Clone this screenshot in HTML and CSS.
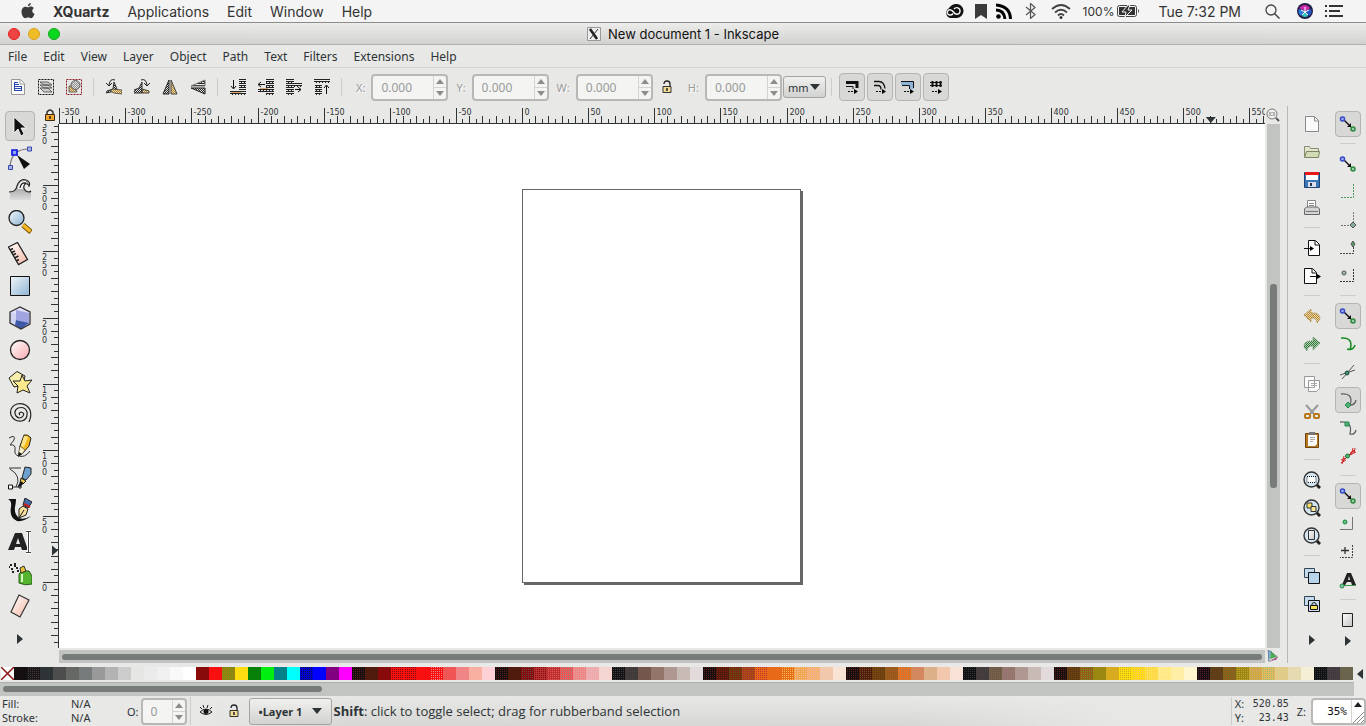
FILE: index.html
```html
<!DOCTYPE html>
<html lang="en">
<head>
  <meta charset="UTF-8">
  <meta name="viewport" content="width=device-width, initial-scale=1.0">
  <title>New document 1 - Inkscape</title>
  <link rel="stylesheet" href="styles.css">
</head>
<body>
  <svg class="defs" aria-hidden="true">
    <defs>
      <pattern id="dither" width="2" height="2" patternUnits="userSpaceOnUse"><path d="M0 0h1v1H0zM1 1h1v1H1z" fill="#222"/></pattern>
      <pattern id="rows" width="3" height="4" patternUnits="userSpaceOnUse"><path d="M0 0h3v1H0zM0 2h3v1H0zM2 3h1v1H2z" fill="#222"/></pattern>
      <pattern id="gold" width="2" height="2" patternUnits="userSpaceOnUse"><path d="M0 0h2v2H0z" fill="#ead9b0"/><path d="M0 0h1v1H0zM1 1h1v1H1z" fill="#b8862c"/></pattern>
      <pattern id="green" width="2" height="2" patternUnits="userSpaceOnUse"><path d="M0 0h2v2H0z" fill="#b4ccb4"/><path d="M0 0h1v1H0zM1 1h1v1H1z" fill="#2c7a34"/></pattern>
      <linearGradient id="sky" x2="1" y2="1"><stop stop-color="#f2f7fb"/><stop offset="1" stop-color="#8db4d4"/></linearGradient>
      <linearGradient id="skin" x2="1" y2="1"><stop stop-color="#fff"/><stop offset="1" stop-color="#f4b8a4"/></linearGradient>
      <linearGradient id="pink" x2="1" y2="1"><stop stop-color="#fff"/><stop offset="1" stop-color="#f7a9ae"/></linearGradient>
      <linearGradient id="metal" x2="0" y2="1"><stop stop-color="#888"/><stop offset="1" stop-color="#ddd"/></linearGradient>
      <linearGradient id="paper" x2="1" y2="1"><stop stop-color="#fff"/><stop offset="1" stop-color="#c4c4c4"/></linearGradient>
    </defs>
    <symbol id="snap" viewBox="0 0 18 18">
      <path d="M5 5l7 7" stroke="#111" stroke-width="1.4"/><path d="M12 8v4H8z" fill="#111"/>
      <circle cx="3.500" cy="4" r="2" fill="#a8b8ee" stroke="#3048c8" stroke-width="1.500"/>
      <circle cx="14" cy="14" r="2" fill="#9cc8b4" stroke="#2e8a3a" stroke-width="1.500"/>
    </symbol>
    <symbol id="unlocked" viewBox="0 0 14 14">
      <path d="M4 4q0-3 3-3t3 3v2" fill="none" stroke="#222" stroke-width="1.300"/><path d="M3 6.500h8v6H3z" fill="#f3dc92" stroke="#333"/><path d="M7 8v3" stroke="#222" stroke-width="1.500"/>
    </symbol>
    <symbol id="more" viewBox="0 0 8 10"><path d="M1 0l6 5-6 5z" fill="#2e3436"/></symbol>
    <symbol id="lens" viewBox="0 0 18 18">
      <path d="M13 13l4 4" stroke="#222" stroke-width="3"/><circle cx="8.500" cy="8.500" r="7.500" fill="#d5e6f3" stroke="#333" stroke-width="1.400"/>
    </symbol>
  </svg>

  <header class="mac-bar">
    <nav class="mac-menu" aria-label="System">
      <a href="#" aria-label="Apple menu"><svg class="apple" viewBox="0 0 14 16"><path d="M9.800 0c.1 1.800-1.200 3.200-2.900 3.300C6.800 1.700 8.200.2 9.800 0zM7 4.300c.8 0 1.600-.8 3-.8 1 0 2.200.5 2.900 1.600-2.400 1.500-2 4.900.6 5.800-.5 1.500-1.900 4.300-3.400 4.300-1.100 0-1.600-.7-2.900-.7s-1.800.7-2.900.7C2.500 15.200.500 11.700.500 8.700c0-3.200 2-5 3.900-5 1.200 0 2 .6 2.600.6z" fill="#3a3a3a"/></svg></a>
      <a class="app-name" href="#">XQuartz</a>
      <a href="#">Applications</a>
      <a href="#">Edit</a>
      <a href="#">Window</a>
      <a href="#">Help</a>
    </nav>
    <div class="mac-status">
      <svg width="20" height="14" viewBox="0 0 20 14"><path d="M6 14A5.500 5.500 0 0 1 5 4Q8 0 12 0a7 7 0 0 1 1 14z" fill="#111"/><path d="M9 9.500c-2 3-7 1-5.500-2C5 4.500 8 6 9.500 8c2 3 6 3 6.500-.5.500-4-4-5-6-2.500" fill="none" stroke="#f4f4f4" stroke-width="1.400"/></svg>
      <svg class="bookmark" width="12" height="15" viewBox="0 0 12 15"><path d="M0 0h12v15l-6-4-6 4z" fill="#3a3a3a"/></svg>
      <svg class="rss" width="16" height="16" viewBox="0 0 16 16"><circle cx="2.500" cy="13.500" r="2.300"/><path d="M0 7q8 0 9 9M0 2q14 1 14.500 14" fill="none" stroke="#000" stroke-width="3"/></svg>
      <svg class="bluetooth" width="11" height="16" viewBox="0 0 11 16"><path d="M1 4l9 7.500-4.500 4V.5L10 4.500 1 12" fill="none" stroke="#555" stroke-width="1.200"/></svg>
      <svg class="wifi" width="20" height="15" viewBox="0 0 20 15"><path d="M1 5q9-8 18 0M4 8.500q6-5.500 12 0M7 11.500q3-3 6 0" fill="none" stroke="#444" stroke-width="1.800"/><circle cx="10" cy="13.500" r="1.500" fill="#333"/></svg>
      <span class="charge">100%</span>
      <svg class="battery" width="23" height="12" viewBox="0 0 23 12"><rect x=".5" y=".5" width="19" height="11" rx="2" fill="#f4f4f4" stroke="#444"/><path d="M2 2h16v8H2z" fill="#333"/><path d="M11 0L5 7h4l-1 5 7-7h-4l2-5z" fill="#333" stroke="#f4f4f4"/><path d="M21 4q2 2 0 4z" fill="#444"/></svg>
      <span class="clock">Tue 7:32 PM</span>
      <svg class="search" width="15" height="15" viewBox="0 0 15 15"><circle cx="6" cy="6" r="5" fill="none" stroke="#444" stroke-width="1.300"/><path d="M9.500 9.500l5 5" stroke="#444" stroke-width="1.500"/></svg>
      <svg class="siri" width="16" height="16" viewBox="0 0 16 16"><circle cx="8" cy="8" r="8" fill="#231c46"/><path d="M2 5q6-6 11 0L9 8z" fill="#d22bb0"/><path d="M2 6l6 2-4 5q-4-3-2-7z" fill="#2e7be0"/><path d="M14 6L8 8l4 5q4-3 2-7z" fill="#2457c8"/><path d="M5 13l3-5 3 5q-3 2-6 0z" fill="#31c8c0"/><path d="M8 4v5M4 7l4 2 4-2M8 9l-3 3M8 9l3 3" stroke="#fff" fill="none"/></svg>
      <svg class="list" width="18" height="12" viewBox="0 0 18 12"><path d="M0 1h2M4 1h14M0 6h2M4 6h11M0 11h2M4 11h14" stroke="#333" stroke-width="2"/></svg>
    </div>
  </header>

  <div class="title-bar">
    <div class="lights">
      <button class="light close" aria-label="Close"></button>
      <button class="light minimize" aria-label="Minimize"></button>
      <button class="light maximize" aria-label="Zoom"></button>
    </div>
    <div class="title">
      <svg width="14" height="14" viewBox="0 0 14 14"><path d="M.5.5h13v13H.5z" fill="#eee" stroke="#999"/><path d="M3 2l7 10" stroke="#222" stroke-width="2.600"/><path d="M11 2L3 12" stroke="#333"/></svg>
      <h1>New document 1 - Inkscape</h1>
    </div>
  </div>

  <nav class="menu-bar" aria-label="Inkscape">
    <a href="#">File</a><a href="#">Edit</a><a href="#">View</a><a href="#">Layer</a><a href="#">Object</a><a href="#">Path</a><a href="#">Text</a><a href="#">Filters</a><a href="#">Extensions</a><a href="#">Help</a>
  </nav>

  <div class="tool-options">
    <button class="cell" aria-label="Select all"><svg viewBox="0 0 16 16"><path d="M1.500.5h9l4 4v11h-13z" fill="#fff" stroke="#999"/><path d="M10 1v4h4" fill="none" stroke="#999"/><path d="M4 3.500h4M4 5.500h5M4 7.500h8M4 9.500h8M4 11.500h8M4.500 4v8M11.500 7v5" stroke="#2948b8"/></svg></button>
    <button class="cell" aria-label="Select all in all layers"><svg viewBox="0 0 16 16"><path d="M.5.5h15v15H.5z" fill="none" stroke="#111" stroke-dasharray="2 1"/><path d="M2 3h8l4 3H6zM2 6h8l4 3H6zM2 9h8l4 4H6z" fill="#ccc" stroke="#444" stroke-width=".8"/></svg></button>
    <button class="cell" aria-label="Deselect"><svg viewBox="0 0 16 16"><path d="M.5.5h15v15H.5z" fill="none" stroke="#8c1c24" stroke-dasharray="2 1"/><path d="M3 7h5l3 6H3z" fill="url(#gold)" stroke="#666"/><circle cx="9.500" cy="6" r="4.500" fill="#ddd" stroke="#555"/><circle cx="9.500" cy="6" r="4" fill="url(#dither)" opacity=".4"/></svg></button>
    <i class="sep"></i>
    <button class="cell" aria-label="Rotate left"><svg viewBox="0 0 16 16"><path d="M9 1Q4-1 3 6M0 4l3 3 3-3" fill="none" stroke="#222"/><path d="M8 3l3 7-6 3-5 1 1-2 6-2z" fill="url(#dither)" stroke="#333"/><path d="M7 10l9 1v4l-8-1-4-2z" fill="url(#gold)" stroke="#444" stroke-width=".8"/></svg></button>
    <button class="cell" aria-label="Rotate right"><svg viewBox="0 0 16 16"><path d="M7 1q5-2 6 5M10 4l3 3 3-3" fill="none" stroke="#222"/><path d="M8 10l7 2v2H8z" fill="url(#gold)" stroke="#444"/><path d="M8 3v11H0v-3l5-2z" fill="url(#dither)" stroke="#333"/></svg></button>
    <button class="cell" aria-label="Flip horizontal"><svg viewBox="0 0 16 16"><path d="M7 1v14H1z" fill="url(#dither)" stroke="#222"/><path d="M9 1v14h6z" fill="url(#gold)" stroke="#444"/></svg></button>
    <button class="cell" aria-label="Flip vertical"><svg viewBox="0 0 16 16"><path d="M15 1v6H1z" fill="url(#rows)" stroke="#777"/><path d="M15 15V9H1z" fill="url(#dither)" stroke="#222"/></svg></button>
    <i class="sep"></i>
    <button class="cell" aria-label="Lower to bottom"><svg viewBox="0 0 16 16"><path d="M9 0h7v11H9zM0 12h16v4H0z" fill="url(#rows)"/><path d="M3.500 1v8M1 7l2.500 3L6 7" fill="none" stroke="#111"/><path d="M1 13.500h10" stroke="#d9a56e"/></svg></button>
    <button class="cell" aria-label="Lower"><svg viewBox="0 0 16 16"><path d="M8 0h8v16H8zM0 9h12v4H0z" fill="url(#rows)"/><path d="M1 5.500h6M3 3L0 5.500 3 8" fill="none" stroke="#111"/><path d="M2 9.500h8" stroke="#d9a56e"/></svg></button>
    <button class="cell" aria-label="Raise"><svg viewBox="0 0 16 16"><path d="M0 0h8v16H0zM6 4h10v4H6z" fill="url(#rows)"/><path d="M9 10.500h6M12 8l3 2.500-3 2.500" fill="none" stroke="#111"/></svg></button>
    <button class="cell" aria-label="Raise to top"><svg viewBox="0 0 16 16"><path d="M0 0h16v4H0zM1 5h7v11H1z" fill="url(#rows)"/><path d="M12.500 6v9M10 9l2.500-3L15 9" fill="none" stroke="#111"/></svg></button>
    <i class="sep sep-wide"></i>
    <label class="dim" for="pos-x">X:</label>
    <div class="spin"><input id="pos-x" type="text" value="0.000" disabled><div class="steps"><button aria-label="Increase X" disabled></button><button aria-label="Decrease X" disabled></button></div></div>
    <label class="dim" for="pos-y">Y:</label>
    <div class="spin"><input id="pos-y" type="text" value="0.000" disabled><div class="steps"><button aria-label="Increase Y" disabled></button><button aria-label="Decrease Y" disabled></button></div></div>
    <label class="dim" for="size-w">W:</label>
    <div class="spin"><input id="size-w" type="text" value="0.000" disabled><div class="steps"><button aria-label="Increase width" disabled></button><button aria-label="Decrease width" disabled></button></div></div>
    <button class="cell ratio" aria-label="Lock width and height"><svg viewBox="0 0 14 14"><use href="#unlocked"/></svg></button>
    <label class="dim" for="size-h">H:</label>
    <div class="spin"><input id="size-h" type="text" value="0.000" disabled><div class="steps"><button aria-label="Increase height" disabled></button><button aria-label="Decrease height" disabled></button></div></div>
    <select class="drop unit" aria-label="Unit"><option>mm</option></select>
    <i class="sep"></i>
    <button class="toggle on" aria-label="Scale stroke width"><svg viewBox="0 0 14 14"><path d="M1 2.500h11V8" fill="none" stroke="#111" stroke-width="3"/><path d="M1 6.500h7V9" fill="none" stroke="#111"/><path d="M3 11.500h6" stroke="#111" stroke-dasharray="2 1"/><path d="M9 9l4 2.500L9 14z"/></svg></button>
    <button class="toggle on" aria-label="Scale corners"><svg viewBox="0 0 14 14"><path d="M1 1.500h5q5 0 6 7M1 5.500h4q3 0 3 4" fill="none" stroke="#111" stroke-width="1.300"/><path d="M3 11.500h6" stroke="#111" stroke-dasharray="2 1"/><path d="M9 9l4 2.500L9 14z"/></svg></button>
    <button class="toggle on" aria-label="Move gradients"><svg viewBox="0 0 14 14"><path d="M0 1h13v8H9V5H0z" fill="#8fb4dc"/><path d="M0 1.500h12.500V8M1 5.500h7.500V9" fill="none" stroke="#111"/><path d="M3 11.500h6" stroke="#111" stroke-dasharray="2 1"/><path d="M9 9l4 2.500L9 14z"/></svg></button>
    <button class="toggle on" aria-label="Move patterns"><svg viewBox="0 0 14 14"><path d="M1 2.500h12M1 5.500h12M3.500 1v6M7.500 1v6M11.500 1v6" fill="none" stroke="#111"/><path d="M2 2.500h3M6 2.500h3M10 2.500h3M2 5.500h3M6 5.500h3M10 5.500h3" stroke="#111" stroke-width="2"/><path d="M3 11.500h6" stroke="#111" stroke-dasharray="2 1"/><path d="M9 9l4 2.500L9 14z"/></svg></button>
  </div>

  <main class="workspace">
    <div class="toolbox" role="toolbar" aria-label="Tools">
      <button class="tool on" aria-label="Selector"><svg viewBox="0 0 24 24"><path d="M6 3v16l4-4 3 7 3-2-3-6h5z" fill="#111" stroke="#fff" stroke-width=".8"/></svg></button>
      <button class="tool" aria-label="Node editor"><svg viewBox="0 0 24 24"><path d="M2 21Q3 3 21 3" fill="none" stroke="#777" stroke-width="1.200"/><path d="M9 9l13 9-6 5z" fill="#111"/><path d="M4 4h5v5H4z" fill="#8aa4ee" stroke="#0a10e8" stroke-width="1.600"/><path d="M19.500 1h4v4h-4zM.500 19.500h4v4h-4z" fill="#aab4e8" stroke="#3848b0"/></svg></button>
      <button class="tool" aria-label="Tweak"><svg viewBox="0 0 24 24"><path d="M2 13q7 1 8-5 3-7 9-5l2 3-2 1q-4-2-4 1 0 5 4 5h4v9H2z" fill="url(#metal)"/><path d="M10 11q0-9 8-8l1 4q-5 0-4 4z" fill="#f4f4f4"/><path d="M1 14q7 0 8-6 3-8 9-6 5 2 3 6-1-3-4-2-3 4 1 7 3 2 5 0M12 10q1-6 6-5" fill="none" stroke="#222" stroke-width="1.200"/></svg></button>
      <button class="tool" aria-label="Zoom"><svg viewBox="0 0 24 24"><path d="M15 15l8 7" stroke="#6b4a00" stroke-width="5"/><path d="M15 15l7.500 6.500" stroke="#f5b820" stroke-width="3.500"/><circle cx="8.500" cy="8" r="7.500" fill="url(#sky)" stroke="#222" stroke-width="1.300"/></svg></button>
      <button class="tool" aria-label="Measure"><svg viewBox="0 0 24 24"><path d="M.500 5L9.500.5l10 17-9 5z" fill="url(#skin)" stroke="#222" stroke-width="1.300"/><path d="M2 8l3-1.500M3.500 10.500L7 9M5 13l3-1.500M6.500 16l4-2M8 19l3-1.500" stroke="#222" stroke-width="1.500"/></svg></button>
      <button class="tool" aria-label="Rectangle"><svg viewBox="0 0 24 24"><path d="M2.500 2.500h19v19h-19z" fill="url(#sky)" stroke="#111"/></svg></button>
      <button class="tool" aria-label="3D box"><svg viewBox="0 0 24 24"><path d="M2 6l10-5 10 5v12l-9 5-11-6z" fill="#e0e0f8"/><path d="M8 4l13 3v12l-8-4-5-1z" fill="#a0a4e0"/><path d="M2 6l6 2v11l-6-3z" fill="#d0d2f2"/><path d="M8 14l13 3-8 6-6-4z" fill="#3e58a8"/><path d="M2 6l10-5 10 5v12l-9 5-11-6z" fill="none" stroke="#333" stroke-width="1.300"/></svg></button>
      <button class="tool" aria-label="Ellipse"><svg viewBox="0 0 24 24"><circle cx="12" cy="12" r="9.500" fill="url(#pink)" stroke="#222" stroke-width="1.300"/></svg></button>
      <button class="tool" aria-label="Star"><svg viewBox="0 0 24 24"><path d="M1 8l8-6.500L17 6l-2 9-9 2z" fill="#f8efae" stroke="#222"/><path d="M14 5l3 6 7-1-5 6 3 7-7-3-6 3 1-7-5-5 7 0z" fill="#fbe98c" stroke="#222"/></svg></button>
      <button class="tool" aria-label="Spiral"><svg viewBox="0 0 24 24"><path d="M12 13q-2-2 1-3 4 1 2 4-3 4-7 0-3-5 2-8 7-2 9 4 1 7-5 9-8 1-11-6Q1 5 9 2q9-2 13 6 2 6-1 12" fill="none" stroke="#222" stroke-width="1.200"/></svg></button>
      <button class="tool" aria-label="Pencil"><svg viewBox="0 0 24 24"><path d="M1 4q7-4 5 2l-4 5q6-1 5 5-1 5 4 6 6 2 11-5" fill="none" stroke="#333"/><path d="M16 1q4-1 7 3l-2 8-7 8-3 1 1-9z" fill="#f3b81c" stroke="#222"/><path d="M16 2l4 1-4 10-3-1z" fill="#fbe488"/><path d="M12 12l5 4-3 4-4 2z" fill="#fff1c8" stroke="#333" stroke-width=".6"/><path d="M11 18l3 2-4 3z" fill="#111"/></svg></button>
      <button class="tool" aria-label="Bezier"><svg viewBox="0 0 24 24"><path d="M1 2h12M2 3q12 7 6 18M3 21h9" fill="none" stroke="#333"/><path d="M17 1l6 1v6l-5 6-4-2z" fill="#6d9fd0" stroke="#222"/><path d="M13 12l5 3-3 3-3-1z" fill="#e9c64c" stroke="#222"/><path d="M14 16l-3 5" stroke="#111" stroke-width="3"/><path d="M.5 19h4v4h-4zM11 20h2v2h-2z" fill="#fff" stroke="#111"/></svg></button>
      <button class="tool" aria-label="Calligraphy"><svg viewBox="0 0 24 24"><path d="M0 1l8 0q0 4-1 8-1 7 4 11 5 2 12-2-7 6-14 5Q1 20 3 9q1-6-3-8z" fill="#111"/><path d="M17 0l7 4-4 6-5-3z" fill="#3f6db0" stroke="#222"/><path d="M15 8l5 3-2 6-7 3 0-9z" fill="#f8df9c" stroke="#222"/><path d="M16 6l6 3" stroke="#c82020" stroke-width="2"/><path d="M11 20l5-8" stroke="#111"/></svg></button>
      <button class="tool" aria-label="Text"><svg viewBox="0 0 24 24"><path d="M7 3h7l6 17h-6l-1-3H7l-1 3H0zM10 8l-2 6h4z" fill="#222" fill-rule="evenodd"/><path d="M18 1.500h5M20.500 2v20M18 22.500h5" stroke="#fff" stroke-width="3"/><path d="M18 1.500h5M20.500 2v20M18 22.500h5" stroke="#444"/></svg></button>
      <button class="tool" aria-label="Spray"><svg viewBox="0 0 24 24"><path d="M2 3h2M6 2h2M3 7h2M8 6h2M4 10h2M9 9h2M6 4h2M1 5h1" stroke="#222" stroke-width="2"/><path d="M11 12l3-3h7l3 5v8q-7 2-13-1z" fill="#55b52e" stroke="#2a5a18"/><path d="M12 6l4-2 2 5-5 2z" fill="#e8c23c" stroke="#333"/><path d="M14 12v8" stroke="#d8f4c4" stroke-width="2"/></svg></button>
      <button class="tool" aria-label="Eraser"><svg viewBox="0 0 24 24"><path d="M11 1l10 5-9 17-9-5z" fill="url(#skin)" stroke="#333" stroke-width="1.200"/></svg></button>
      <button class="tool more" aria-label="More tools"><svg viewBox="0 0 8 10"><use href="#more"/></svg></button>
    </div>

    <div class="editor">
      <button class="guide-lock" aria-label="Lock guides"><svg viewBox="0 0 12 12"><path d="M3 6V3q3-4 6 0v3" fill="none" stroke="#333" stroke-width="1.500"/><path d="M1.500 5.500h9v6h-9z" fill="#f3a62b" stroke="#3b2a10"/><path d="M6 7v3" stroke="#222" stroke-width="1.500"/></svg></button>
      <svg class="ruler ruler-x" id="ruler-x"></svg>
      <button class="zoom-lock" aria-label="Zoom on resize"><svg viewBox="0 0 14 14"><circle cx="6" cy="6" r="5" fill="#eee" stroke="#777"/><path d="M10 10l3 3" stroke="#555" stroke-width="2"/><path d="M4 4v4M8 4v4M6 4v1M6 7v1" stroke="#777"/></svg></button>
      <svg class="ruler ruler-y" id="ruler-y"></svg>
      <div class="canvas"><div class="page" id="page"></div></div>
      <div class="scroll scroll-y"><div class="thumb"></div></div>
      <div class="scroll scroll-x"><div class="thumb"></div></div>
      <button class="cms" aria-label="Color management"><svg viewBox="0 0 12 12"><path d="M1 0l4 1-3 10H1z" fill="#79aed8"/><path d="M4 1l6 6-7 2z" fill="#4eab58"/><path d="M2 11l9-4-2 3z" fill="#c04a9a"/><path d="M1 0l10 7-9 5z" fill="none" stroke="#666" stroke-dasharray="1 1"/></svg></button>
    </div>

    <div class="commands" role="toolbar" aria-label="Commands">
      <button aria-label="New"><svg viewBox="0 0 18 18"><path d="M2.500 1.500h9l4 4v11h-13z" fill="#fafafa" stroke="#8a8a8a"/><path d="M11.500 2v4h4" fill="none" stroke="#8a8a8a"/></svg></button>
      <button aria-label="Open"><svg viewBox="0 0 18 18"><path d="M1.500 14V3.500h5l1 2h8V9" fill="#e2e6cc" stroke="#888c70"/><path d="M3.500 8.500h13l-1 6h-14z" fill="#d0dab4" stroke="#7c8460"/></svg></button>
      <button aria-label="Save"><svg viewBox="0 0 18 18"><path d="M1.500 1.500h15v15h-15z" fill="#3c74b8" stroke="#1f4274"/><path d="M3 3h12v6H3z" fill="#fff"/><path d="M2 1h14v3H2z" fill="#e81818"/><path d="M5 11h8v5H5z" fill="#dde"/><path d="M7 12h2v3H7z" fill="#234"/></svg></button>
      <button aria-label="Print"><svg viewBox="0 0 18 18"><path d="M4.500 9V1.500h8V9M6 4.500h5M6 6.500h5" fill="#fff" stroke="#888"/><path d="M1.500 10l2-2h11l2 2v5.500h-15z" fill="#d4d4d4" stroke="#666"/><path d="M3 12.500h12" stroke="#777"/></svg></button>
      <i class="hsep"></i>
      <button aria-label="Import"><svg viewBox="0 0 18 18"><path d="M5.500 1.500h7l4 4v11h-11z" fill="#fff" stroke="#111"/><path d="M12 2v4h4M1 9.500h9" fill="none" stroke="#111"/><path d="M7 7l4 2.500L7 12z"/></svg></button>
      <button aria-label="Export"><svg viewBox="0 0 18 18"><path d="M1.500 1.500h8l4 4v11h-12z" fill="#fff" stroke="#111"/><path d="M9 2v4h4M7 9.500h9" fill="none" stroke="#111"/><path d="M14 7l4 2.500-4 2.500z"/></svg></button>
      <i class="hsep"></i>
      <button aria-label="Undo"><svg viewBox="0 0 18 18"><path d="M1 8l7-6v4q9-1 9 6l-3 4q0-5-6-5v4z" fill="url(#gold)" stroke="#a08040" stroke-dasharray="1 1"/></svg></button>
      <button aria-label="Redo"><svg viewBox="0 0 18 18"><path d="M17 8l-7-6v4q-9-1-9 6l3 4q0-5 6-5v4z" fill="url(#green)" stroke="#5a8a60" stroke-dasharray="1 1"/></svg></button>
      <i class="hsep"></i>
      <button aria-label="Copy"><svg viewBox="0 0 18 18"><path d="M1.500 1.500h10v11h-10zM5.500 5.500h11v8l-3 3h-8z" fill="#fafafa" stroke="#999"/><path d="M8 8.500h6M8 10.500h6M8 12.500h4" stroke="#aaa"/></svg></button>
      <button aria-label="Cut"><svg viewBox="0 0 18 18"><path d="M3 2l8 9M15 2l-8 9" stroke="#999" stroke-width="2"/><rect x="2" y="11" width="5" height="4" rx="1" fill="none" stroke="#b87818" stroke-width="2"/><rect x="11" y="11" width="5" height="4" rx="1" fill="none" stroke="#b87818" stroke-width="2"/></svg></button>
      <button aria-label="Paste"><svg viewBox="0 0 18 18"><path d="M2.500 2.500h13v14h-13z" fill="#b9771d" stroke="#6e4510"/><path d="M5 4h9v9l-2 2H5z" fill="#fafafa"/><path d="M6 1h6v3H6z" fill="#777"/><path d="M7 6.500h5M7 8.500h5M7 10.500h3" stroke="#aaa"/></svg></button>
      <i class="hsep"></i>
      <button aria-label="Zoom selection"><svg viewBox="0 0 18 18"><use href="#lens"/><path d="M4 5.500h9v6H4z" fill="#fff" stroke="#111" stroke-dasharray="1 1"/></svg></button>
      <button aria-label="Zoom drawing"><svg viewBox="0 0 18 18"><use href="#lens"/><path d="M4 4h5v5H4z" fill="#f8e060" stroke="#333"/><path d="M8 7.500h5v5H8z" fill="#f8e88c" stroke="#333"/></svg></button>
      <button aria-label="Zoom page"><svg viewBox="0 0 18 18"><use href="#lens"/><path d="M5.500 3.500h6v9h-6z" fill="url(#paper)" stroke="#333"/></svg></button>
      <i class="hsep"></i>
      <button aria-label="Duplicate"><svg viewBox="0 0 18 18"><path d="M1.500 1.500h10v9h-10z" fill="#c5dbec" stroke="#345"/><path d="M5.500 5.500h11v11h-11z" fill="#b8d4ea" stroke="#111"/></svg></button>
      <button aria-label="Clone"><svg viewBox="0 0 18 18"><path d="M1.500 1.500h10v9h-10z" fill="#c5dbec" stroke="#345"/><path d="M5.500 5.500h11v11h-11z" fill="#c8def0" stroke="#111"/><path d="M9 10V8.500q2-2 4 0V10" fill="none" stroke="#111"/><path d="M7.500 10.500h7v4h-7z" fill="#f6e05c" stroke="#111"/></svg></button>
      <button class="more" aria-label="More commands"><svg viewBox="0 0 8 10"><use href="#more"/></svg></button>
    </div>

    <div class="commands snaps" role="toolbar" aria-label="Snapping">
      <button class="on" aria-label="Enable snapping"><svg><use href="#snap"/></svg></button>
      <i class="hsep"></i>
      <button aria-label="Snap bounding boxes"><svg><use href="#snap"/></svg></button>
      <button aria-label="Snap box edges"><svg viewBox="0 0 18 18"><path d="M14.500 1v13.500H1" fill="none" stroke="#4f9a5c" stroke-dasharray="2 1"/></svg></button>
      <button aria-label="Snap box corners"><svg viewBox="0 0 18 18"><path d="M14.500 1v13.500H1" fill="none" stroke="#777" stroke-dasharray="2 1"/><path d="M14 11l3 3-3 3-3-3z" fill="#8a9" stroke="#555"/></svg></button>
      <button aria-label="Snap edge midpoints"><svg viewBox="0 0 18 18"><path d="M14.500 8v6.500H1" fill="none" stroke="#444" stroke-dasharray="2 1"/><path d="M14 2l2 3-2 3-2-3z" fill="#5a9a68" stroke="#555"/></svg></button>
      <button aria-label="Snap box centers"><svg viewBox="0 0 18 18"><path d="M14.500 2v12.500H1" fill="none" stroke="#333" stroke-dasharray="2 1"/><circle cx="5" cy="6" r="2" fill="#9cb8a4" stroke="#555"/></svg></button>
      <i class="hsep"></i>
      <button class="on" aria-label="Snap nodes"><svg><use href="#snap"/></svg></button>
      <button aria-label="Snap to paths"><svg viewBox="0 0 18 18"><path d="M2 3q13-1 9 12M8 14q6 2 8-4" fill="none" stroke="#178a24" stroke-width="1.600"/></svg></button>
      <button aria-label="Snap intersections"><svg viewBox="0 0 18 18"><path d="M1 12l15-5M3 16L15 2" stroke="#555" fill="none"/><circle cx="8" cy="10" r="2" fill="#38a048" stroke="#245"/></svg></button>
      <button class="on" aria-label="Snap cusp nodes"><svg viewBox="0 0 18 18"><path d="M2 3q13-1 9 11q5 0 6-5" fill="none" stroke="#666" stroke-width="1.300"/><path d="M9 11l3 3-3 3-3-3z" fill="#54b070" stroke="#285"/></svg></button>
      <button aria-label="Snap smooth nodes"><svg viewBox="0 0 18 18"><path d="M1 3q13-1 10 12q5 1 6-4" fill="none" stroke="#666" stroke-width="1.300"/><path d="M6 3h4v4H6z" fill="#54b070" stroke="#285"/></svg></button>
      <button aria-label="Snap line midpoints"><svg viewBox="0 0 18 18"><path d="M2 16l13-13M2 13l5-2M2 16l5-3M3 17l2-8M11 6l5-2M11 8l6-3M12 8l2-7M15 6l1-5" stroke="#d02828"/><circle cx="8.500" cy="9" r="2" fill="#60b078" stroke="#173"/></svg></button>
      <i class="hsep"></i>
      <button class="on" aria-label="Snap others"><svg><use href="#snap"/></svg></button>
      <button aria-label="Snap object centers"><svg viewBox="0 0 18 18"><path d="M13.500 2v12.500H1" fill="none" stroke="#777"/><circle cx="6" cy="7" r="2" fill="#70c080" stroke="#184"/></svg></button>
      <button aria-label="Snap rotation centers"><svg viewBox="0 0 18 18"><path d="M13.500 2v12.500H1" fill="none" stroke="#444" stroke-dasharray="2 1"/><path d="M2 7.500h8M6 4v7" stroke="#333" stroke-width="1.300"/></svg></button>
      <button aria-label="Snap text baseline"><svg viewBox="0 0 18 18"><path d="M8 2h4l5 12h-4l-1-3H8l-2 3H3zM10 5L9 9h2z" fill="#222" fill-rule="evenodd"/><path d="M4 14.500h13" stroke="#3a9a48"/><circle cx="3" cy="15" r="2" fill="#8c9" stroke="#285"/></svg></button>
      <i class="hsep"></i>
      <button aria-label="Snap page border"><svg viewBox="0 0 18 18"><path d="M3.500 2.500h10v13h-10z" fill="url(#paper)" stroke="#222"/></svg></button>
      <button class="more snaps-more" aria-label="More snapping"><svg viewBox="0 0 8 10"><use href="#more"/></svg></button>
    </div>
  </main>

  <div class="palette">
    <button class="swatch none" aria-label="No color"><svg viewBox="0 0 13 13"><path d="M0 0l13 13M13 0L0 13" stroke="#8c1414" stroke-width="1.500"/></svg></button>
    <div class="swatches" id="swatches"></div>
    <button class="palette-menu" aria-label="Palette menu"><svg viewBox="0 0 8 10"><path d="M7 0L1 5l6 5z" fill="#2e3436"/></svg></button>
  </div>
  <div class="palette-scroll"><div class="thumb"></div></div>

  <footer class="status-bar">
    <dl class="style-info">
      <dt>Fill:</dt><dd>N/A</dd>
      <dt>Stroke:</dt><dd>N/A</dd>
    </dl>
    <label class="small" for="opacity">O:</label>
    <div class="spin spin-small"><input id="opacity" type="text" value="0" disabled><div class="steps"><button aria-label="Increase opacity" disabled></button><button aria-label="Decrease opacity" disabled></button></div></div>
    <i class="sep-tall"></i>
    <button class="cell" aria-label="Toggle layer visibility"><svg viewBox="0 0 14 14"><path d="M1 8q6-6 12 0-6 5-12 0z" fill="#ddd" stroke="#222"/><circle cx="7" cy="7.500" r="2.500" fill="#111"/><path d="M3 5L1 3M5 4L4 1M8 4l1-3M11 5l2-2" stroke="#222"/></svg></button>
    <button class="cell" aria-label="Lock layer"><svg viewBox="0 0 14 14"><use href="#unlocked"/></svg></button>
    <select class="drop layer" aria-label="Layer"><option>•Layer 1</option></select>
    <p class="message"><b>Shift</b>: click to toggle select; drag for rubberband selection</p>
    <dl class="coords">
      <dt>X:</dt><dd>520.85</dd>
      <dt>Y:</dt><dd>23.43</dd>
    </dl>
    <label class="small zoom-label" for="zoom">Z:</label>
    <div class="spin zoom"><input id="zoom" type="text" value="35%"><div class="steps"><button aria-label="Zoom in"></button><svg class="grip" viewBox="0 0 13 13"><path d="M1 13L13 1M5 13l8-8M9 13l4-4" stroke="#888"/></svg></div></div>
  </footer>

  <script src="script.js"></script>
</body>
</html>
```
FILE: styles.css
```css
* {
  margin: 0;
  padding: 0;
  box-sizing: border-box;
}

body {
  display: flex;
  flex-direction: column;
  height: 100vh;
  overflow: hidden;
  background: #e8e8e6;
  color: #2e3436;
  font-family: 'Noto Sans', 'Open Sans', sans-serif;
  font-size: 12px;
}

button,
input,
select {
  font: inherit;
  color: inherit;
  background: none;
  border: none;
}

button {
  display: flex;
  align-items: center;
  justify-content: center;
}

a {
  color: inherit;
  text-decoration: none;
}

svg {
  display: block;
  flex: none;
}

.defs {
  position: absolute;
  width: 0;
  height: 0;
}

/* system menu bar */
.mac-bar {
  display: flex;
  justify-content: space-between;
  height: 23px;
  padding: 0 23px 0 21px;
  background: #f4f4f4;
  border-bottom: 1px solid #8c8c8c;
  font-family: Inter, sans-serif;
  font-size: 14px;
  color: #333;
}

.mac-menu,
.mac-status {
  display: flex;
  align-items: center;
}

.mac-menu {
  gap: 18px;
}

.apple {
  width: 14px;
  height: 16px;
}

.app-name {
  font-weight: 700;
}

.bookmark { margin-left: 11px; }
.rss { margin-left: 9px; }
.bluetooth { margin-left: 13px; }
.wifi { margin-left: 15px; }

.charge {
  margin-left: 12px;
  font-size: 12px;
}

.battery { margin-left: 3px; }
.clock { margin-left: 18px; }
.search { margin-left: 24px; }
.siri { margin-left: 17px; }
.list { margin-left: 12px; }

/* window title */
.title-bar {
  display: grid;
  grid-template-columns: 1fr auto 1fr;
  align-items: center;
  height: 22px;
  padding: 0 8px;
  background: linear-gradient(#ececea, #d2d2d0);
  border-bottom: 1px solid #b0b0ae;
}

.lights {
  display: flex;
  gap: 8px;
}

.light {
  width: 12px;
  height: 12px;
  border-radius: 50%;
}

.close { background: #f04444; border: 1px solid #e81c1c; }
.minimize { background: #f0bc28; border: 1px solid #dba21c; }
.maximize { background: #0ad81c; border: 1px solid #12a41c; }

.title {
  display: flex;
  align-items: center;
  gap: 7px;
}

.title h1 {
  font: 400 13px Inter, sans-serif;
  color: #111;
}

.menu-bar {
  display: flex;
  align-items: center;
  gap: 16px;
  height: 23px;
  padding: 0 8px;
  border-bottom: 1px solid #d2d2d0;
}

/* selector options */
.tool-options {
  display: flex;
  align-items: center;
  height: 38px;
  padding-left: 4px;
}

.cell {
  width: 28px;
  height: 28px;
}

.cell svg {
  width: 16px;
  height: 16px;
}

.sep {
  width: 1px;
  height: 18px;
  margin: 0 6px 0 5px;
  background: #ccccca;
}

.sep-wide {
  margin-right: 14px;
}

.dim {
  font-size: 11px;
  color: #989a98;
  text-shadow: 1px 1px #fff;
}

.small {
  font-size: 11px;
}

.spin {
  display: flex;
  width: 77px;
  height: 27px;
  margin: 0 8px 0 6px;
  background: #f4f4f3;
  border: 2px solid #b8b8b6;
  border-radius: 4px;
  overflow: hidden;
}

.spin input {
  flex: 1;
  min-width: 0;
  padding-left: 8px;
  color: #989a98;
  outline: none;
}

.steps {
  display: flex;
  flex-direction: column;
  width: 13px;
  border-left: 1px solid #d4d4d2;
}

.steps button {
  flex: 1;
}

.steps button::before {
  content: '';
  border: 4px solid transparent;
  border-top-width: 0;
  border-bottom: 5px solid #8c8e8c;
}

.steps button + button {
  border-top: 1px solid #d4d4d2;
}

.steps button + button::before {
  border-width: 5px 4px 0;
  border-color: #8c8e8c transparent transparent;
}

.ratio {
  margin: 0 7px 0 -8px;
}

.ratio svg {
  width: 14px;
  height: 14px;
}

.spin + .drop {
  margin-left: -7px;
}

.drop {
  appearance: none;
  border: 1px solid #a4a4a2;
  border-radius: 3px;
  background: url("data:image/svg+xml,%3Csvg xmlns='http://www.w3.org/2000/svg' width='10' height='6'%3E%3Cpath d='M0 0h10L5 6z' fill='%232e3436'/%3E%3C/svg%3E") no-repeat right 5px center, linear-gradient(#f0f0ee, #d2d2d0);
}

.unit {
  width: 43px;
  height: 22px;
  padding-left: 4px;
  font-size: 11px;
}

.toggle {
  width: 26px;
  height: 28px;
  margin-right: 2px;
}

.unit + .sep {
  margin-right: 7px;
}

.toggle svg {
  width: 14px;
  height: 14px;
}

.on {
  background: #d8d8d6;
  border: 1px solid #b4b4b2;
  border-radius: 4px;
}

/* main area */
.workspace {
  flex: 1;
  display: flex;
  min-height: 0;
}

.toolbox {
  display: flex;
  flex-direction: column;
  width: 42px;
  padding: 5px 0 0 5px;
  gap: 2px;
}

.tool {
  width: 30px;
  height: 30px;
}

.tool svg {
  width: 24px;
  height: 24px;
}

.toolbox .more {
  height: 32px;
}

.toolbox .more svg,
.more svg {
  width: 8px;
  height: 10px;
}

.editor {
  flex: 1;
  display: grid;
  grid-template: 18px minmax(0, 1fr) 15px / 17px minmax(0, 1fr) 15px;
  min-width: 0;
}

.guide-lock {
  width: 16px;
  height: 18px;
}

.guide-lock svg {
  width: 12px;
  height: 12px;
}

.ruler {
  width: 100%;
  height: 100%;
  font: 8px 'DejaVu Sans', sans-serif;
  fill: #2e3436;
}

.ruler line {
  stroke: #2e3436;
  shape-rendering: crispEdges;
}

.zoom-lock svg {
  width: 14px;
  height: 14px;
}

.canvas {
  display: flex;
  align-items: center;
  justify-content: center;
  padding-right: 1px;
  background: #fff;
}

.page {
  width: 279px;
  height: 394px;
  border: 1px solid #666;
  box-shadow: 2px 2px #666;
}

.scroll {
  background: #c2c4c2;
  border: 0 solid #e8e8e6;
}

.thumb {
  background: #777b7a;
  border-radius: 3px;
}

.scroll-y {
  padding: 160px 3px;
  border-left-width: 2px;
}

.scroll-y .thumb {
  height: 204px;
}

.scroll-x {
  grid-column: 2;
  padding: 4px 3px;
  border-top-width: 2px;
}

.scroll-x .thumb {
  height: 6px;
}

.cms svg {
  width: 12px;
  height: 12px;
}

.commands {
  display: flex;
  flex-direction: column;
  align-items: center;
  width: 42px;
  margin-left: 7px;
  padding: 4px 0 0 6px;
  border-left: 1px solid #b8b8b6;
}

.commands button {
  width: 26px;
  height: 26px;
  margin: 1px 0;
}

.commands svg {
  width: 18px;
  height: 18px;
}

.commands .hsep {
  width: 16px;
  height: 1px;
  margin: 5px 0 6px;
  background: #ccccca;
}

.commands .more {
  height: 42px;
}

.commands .more svg {
  width: 8px;
  height: 10px;
}

.snaps {
  width: 37px;
  margin: 0;
  padding-left: 0;
  border: none;
}

.commands .snaps-more {
  height: 12px;
}

/* palette */
.palette {
  display: flex;
  height: 13px;
  margin: 4px 0 2px;
  padding-left: 1px;
}

.swatches {
  flex: 1;
  display: flex;
  overflow: hidden;
}

.swatch {
  flex: none;
  width: 13px;
  height: 13px;
}

.none {
  background: #fff;
}

.palette-menu {
  width: 13px;
}

.palette-menu svg {
  width: 8px;
  height: 10px;
}

.palette-scroll {
  height: 14px;
  margin-right: 12px;
  padding: 3px;
  background: #c2c4c2;
  border-top: 1px solid #aeb0ae;
}

.palette-scroll .thumb {
  width: 319px;
  height: 6px;
}

/* status */
.status-bar {
  display: flex;
  align-items: center;
  height: 30px;
  padding-left: 2px;
  background: linear-gradient(90deg, #e8e8e6 14%, transparent 26%, transparent 66%, #e8e8e6 83%), linear-gradient(#e8e8e6, #d6d6d4);
}

.style-info,
.coords {
  display: grid;
  grid-template-columns: 69px 56px;
  line-height: 14px;
  font-size: 11px;
}

.spin-small {
  width: 46px;
  margin: 0 3px 0 2px;
}

.sep-tall {
  width: 1px;
  height: 28px;
  margin-right: 1px;
  background: #ccccca;
}

.status-bar .cell svg {
  width: 14px;
  height: 14px;
}

.layer {
  width: 83px;
  height: 27px;
  margin-left: 1px;
  padding-left: 9px;
  font-size: 11px;
  font-weight: 700;
  background-position: right 9px center, 0 0;
}

.message {
  flex: 1;
  margin-left: 2px;
  font-family: 'Open Sans', sans-serif;
  font-size: 13px;
}

.coords {
  grid-template-columns: 18px 36px;
  padding-left: 3px;
  border-left: 1px solid #ccccca;
}

.coords dd {
  font: 10px/14px 'DejaVu Sans Mono', monospace;
  text-align: right;
}

.zoom-label {
  margin-left: 8px;
}

.zoom {
  width: 55px;
  margin: 0 0 0 5px;
  background: #fff;
}

.zoom input {
  width: 38px;
  padding: 0 4px 0 0;
  text-align: right;
  font: 11px 'DejaVu Sans Mono', monospace;
  color: #111;
}

.zoom .steps button::before {
  border-bottom-color: #222;
}

.grip {
  width: 13px;
  height: 13px;
}
```
FILE: script.js
```js
const NS = 'http://www.w3.org/2000/svg';
const PX_PER_MM = 1.3225;

// base color, optional dither color
const colors = [
  '#140f10', '#1a1617 #3c3c3c', '#2e3436', '#4d4d4d', '#666866', '#777b7c', '#999999', '#b3b3b3', '#cccccc', '#e6e6e4',
  '#ebebeb', '#f0f0f0', '#f9f9f9', '#ffffff', '#880a0a', '#f80f0f', '#9a8412 #6a9010', '#ffdd10', '#068006', '#00ee10',
  '#048088', '#00ffff', '#0000d0 #101050', '#0000ff', '#800080', '#ff00ff', '#140f10 #601a14', '#501a0c', '#880a0a', '#f80f0f #880a0a',
  '#f80f0f #880a0a', '#f80f0f', '#f80f0f #f08080', '#f05555', '#f08585', '#fab0a0', '#ffd0d5', '#140f10 #601a14', '#501a0c', '#880a0a #604848',
  '#b53030 #880a0a', '#b83030 #f05555', '#f05555 #a08880', '#f08585 #e0a098', '#f0a8a8 #e8b8c0', '#f5d5d0', '#140f10 #3c4244', '#3a3a3a #5a4040', '#75564d', '#93756a',
  '#b09892', '#c8bab5', '#e2dadb', '#140f10 #601a14', '#501a0c #801a0c', '#6a4010 #901010', '#a84a18 #a83030', '#e86a18 #b83030', '#e86a18', '#e86a18 #f5c050',
  '#f0a850 #f5b890', '#f5b08a #f0b850', '#f2c8ac', '#f9e3d5', '#140f10 #601a14', '#501a0c #705020', '#6a4010 #804a10', '#935a18 #b05a30', '#e87020 #b08050', '#d08a58 #e08070',
  '#dcb088', '#f2c8ac', '#f8e2d8', '#101112 #303234', '#3f3b3c #504040', '#75604d #68563c', '#93756a #a07880', '#b09892', '#c8bab5', '#e2dadb',
  '#140f10 #601a14', '#6a4010 #503414', '#985a18 #709020', '#9a8812', '#d8aa20', '#ffdc10 #c8b020', '#ffdc10 #f5c060', '#ffe055 #ffd030', '#ffe880 #fff0a0', '#ffeea5',
  '#fff6d0', '#140f10 #601a30', '#5a3f18 #703a18', '#80651e #a05a18', '#9a8812 #c8a030', '#d0aa40 #c8a870', '#e8b860 #90c070', '#e0cc88', '#e6dab0', '#f5efd5',
  '#101112 #303234', '#3f3b3c #504050', '#6a644c'
];

function add(parent, tag, attrs, text) {
  const el = document.createElementNS(NS, tag);
  for (const name in attrs) el.setAttribute(name, attrs[name]);
  if (text !== undefined) el.textContent = text;
  parent.appendChild(el);
}

function tickLength(mm) {
  if (mm % 50 === 0) return 15;
  return mm % 10 === 0 ? 7 : 4;
}

function drawRulers() {
  const page = document.getElementById('page').getBoundingClientRect();
  const rx = document.getElementById('ruler-x');
  const ry = document.getElementById('ruler-y');
  const bx = rx.getBoundingClientRect();
  const by = ry.getBoundingClientRect();
  rx.replaceChildren();
  ry.replaceChildren();

  for (let mm = -1000; mm <= 1000; mm += 5) {
    const x = Math.round(page.left - bx.left + mm * PX_PER_MM) + 0.5;
    if (x >= 0 && x < bx.width) {
      add(rx, 'line', { x1: x, x2: x, y1: 17 - tickLength(mm), y2: 17 });
      if (mm % 50 === 0) add(rx, 'text', { x: x + 2, y: 9 }, mm);
    }

    const y = Math.round(page.bottom - 1 - by.top - mm * PX_PER_MM) + 0.5;
    if (y > -20 && y < by.height) {
      add(ry, 'line', { x1: 16 - tickLength(mm), x2: 16, y1: y, y2: y });
      if (mm % 50 === 0) {
        String(mm).split('').forEach((digit, i) => add(ry, 'text', { x: 0, y: y + 8 + i * 8 }, digit));
      }
    }
  }
  add(rx, 'line', { x1: 0, x2: bx.width, y1: 17.5, y2: 17.5 });
  add(ry, 'line', { x1: 16.5, x2: 16.5, y1: 0, y2: by.height });

  // pointer markers
  const px = page.left - bx.left + 520.85 * PX_PER_MM;
  const py = page.bottom - by.top - 24.5 * PX_PER_MM;
  add(rx, 'path', { d: `M${px - 5} 11h10l-5 6z` });
  add(ry, 'path', { d: `M10 ${py - 5}v10l6-5z` });
}

function drawSwatches() {
  const box = document.getElementById('swatches');
  colors.forEach((entry) => {
    const [base, dots] = entry.split(' ');
    const swatch = document.createElement('button');
    swatch.className = 'swatch';
    swatch.setAttribute('aria-label', base);
    swatch.style.background = dots ? `conic-gradient(${dots} 25%, ${base} 0) 0 0 / 2px 2px` : base;
    box.appendChild(swatch);
  });
}

drawSwatches();
drawRulers();
window.addEventListener('resize', drawRulers);
```
